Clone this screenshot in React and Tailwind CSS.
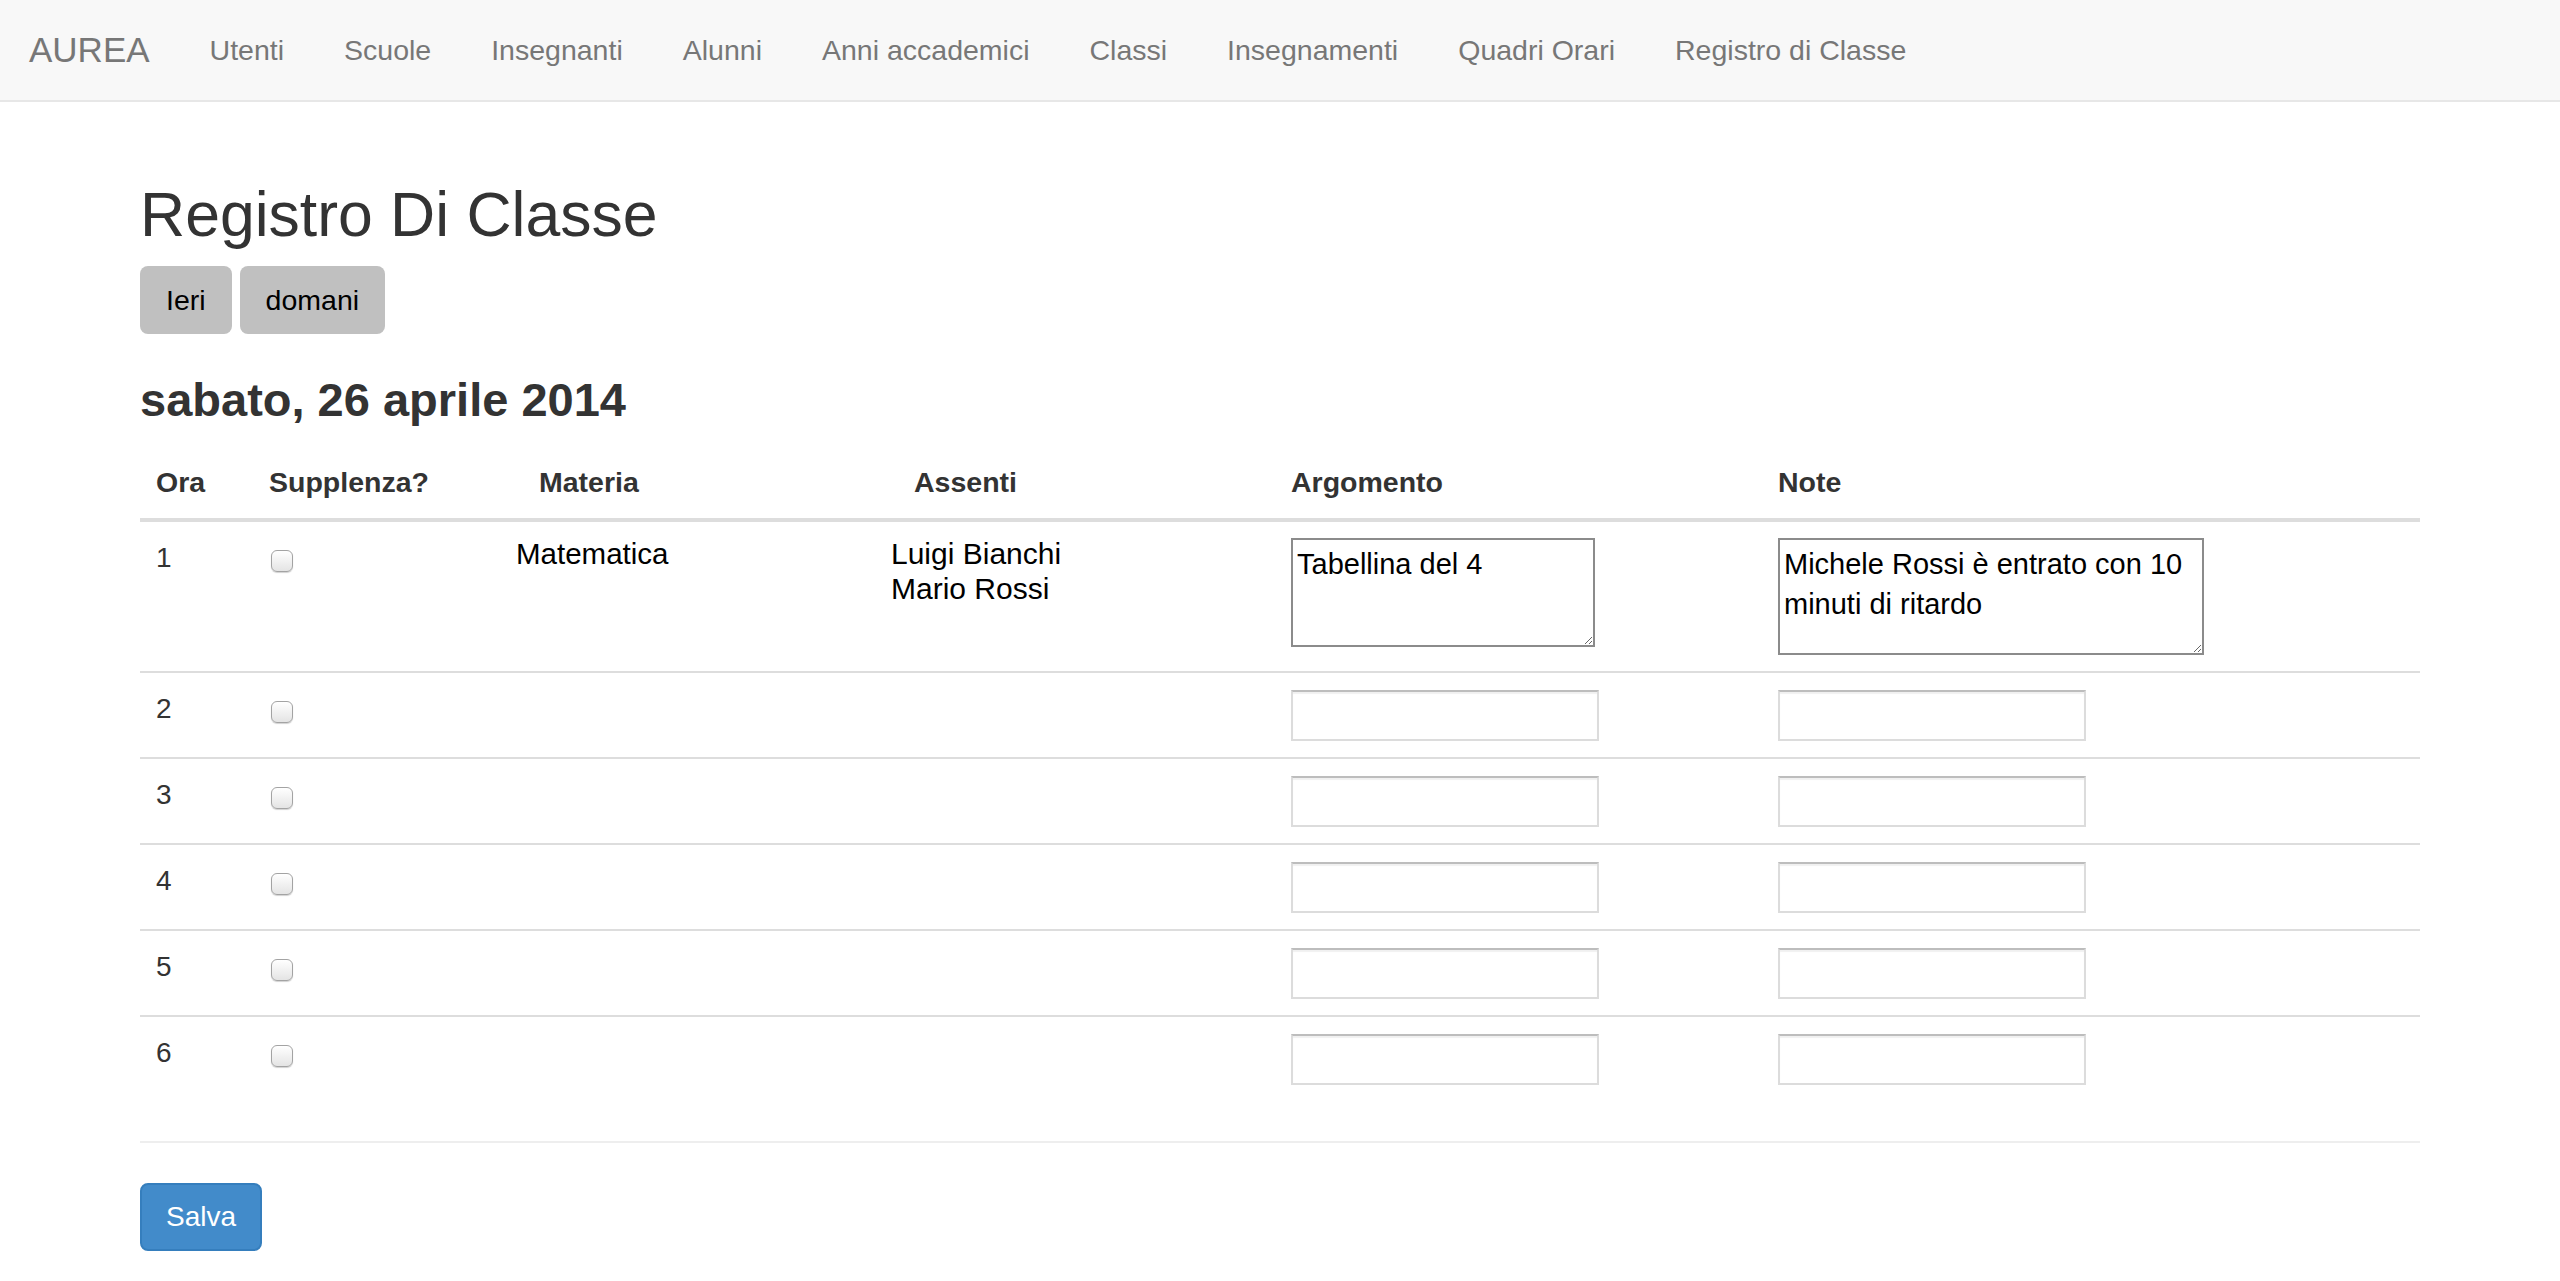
import React from 'react';

const navLinks = ['Utenti', 'Scuole', 'Insegnanti', 'Alunni', 'Anni accademici', 'Classi', 'Insegnamenti', 'Quadri Orari', 'Registro di Classe'];

const rows = [
    { ora: 1, materia: 'Matematica', assenti: ['Luigi Bianchi', 'Mario Rossi'], argomento: 'Tabellina del 4', note: 'Michele Rossi è entrato con 10 minuti di ritardo' },
    { ora: 2 },
    { ora: 3 },
    { ora: 4 },
    { ora: 5 },
    { ora: 6 },
];

function Checkbox() {
    return (
        <input
            type="checkbox"
            className="appearance-none block w-[22px] h-[22px] rounded-[6px] border border-[#a3a3a3] bg-linear-to-b from-white to-[#e4e4e4] shadow-[0_1px_1px_rgba(0,0,0,0.18)]"
        />
    );
}

function TextBox() {
    return (
        <input
            type="text"
            className="block mt-px w-[308px] h-[51px] bg-white border-2 border-[#dcdcdc] border-t-[#bdbdbd] shadow-[inset_0_2px_1px_rgba(0,0,0,0.06)] outline-none"
        />
    );
}

export default function App() {
    return (
        <div className="min-h-screen bg-white font-['Liberation_Sans',Arial,sans-serif]">
            {/* Navbar */}
            <nav className="h-[102px] bg-[#f8f8f8] border-b-2 border-[#e7e7e7] flex items-center">
                <span className="pl-[29px] pr-[30px] text-[35px] leading-[40px] text-[#777]">AUREA</span>
                <ul className="flex">
                    {navLinks.map((l) => (
                        <li key={l} className="px-[30px] text-[28.5px] leading-[40px] text-[#777]">{l}</li>
                    ))}
                </ul>
            </nav>

            <div className="w-[2280px] mx-auto">
                <h2 className="mt-[78px] mb-[18px] text-[62.5px] leading-[68px] font-normal text-[#333]">Registro Di Classe</h2>

                <div className="flex gap-[8px]">
                    <button className="h-[68px] px-[26px] bg-[#c0c0c0] rounded-[8px] text-[28.5px] text-black">Ieri</button>
                    <button className="h-[68px] px-[26px] bg-[#c0c0c0] rounded-[8px] text-[28.5px] text-black">domani</button>
                </div>

                <h3 className="mt-[40px] mb-[20px] text-[47px] leading-[52px] font-bold text-[#333]">sabato, 26 aprile 2014</h3>

                <table className="w-full table-fixed border-separate border-spacing-0 text-[28px] text-[#333]">
                    <colgroup>
                        <col className="w-[113px]" />
                        <col className="w-[247px]" />
                        <col className="w-[375px]" />
                        <col className="w-[400px]" />
                        <col className="w-[487px]" />
                        <col className="w-[658px]" />
                    </colgroup>
                    <thead>
                        <tr className="text-left font-bold leading-[40px] text-[28.5px]">
                            <th className="py-[16px] pl-[16px] border-b-4 border-[#ddd]">Ora</th>
                            <th className="py-[16px] pl-[16px] border-b-4 border-[#ddd]">Supplenza?</th>
                            <th className="py-[16px] pl-[39px] border-b-4 border-[#ddd]">Materia</th>
                            <th className="py-[16px] pl-[39px] border-b-4 border-[#ddd]">Assenti</th>
                            <th className="py-[16px] pl-[16px] border-b-4 border-[#ddd]">Argomento</th>
                            <th className="py-[16px] pl-[16px] border-b-4 border-[#ddd]">Note</th>
                        </tr>
                    </thead>
                    <tbody>
                        {rows.map((r, i) => {
                            const line = i === 0 ? '' : 'border-t-2 border-[#ddd]';
                            return (
                                <tr key={r.ora} className="align-top">
                                    <td className={`${line} py-[16px] pl-[16px] leading-[40px]`}>{r.ora}</td>
                                    <td className={`${line} py-[16px] pl-[18px]`}>
                                        <div className="mt-[12px]"><Checkbox /></div>
                                    </td>
                                    <td className={`${line} pt-[14px] pb-[16px] pl-[16px] leading-[35px] text-[29.5px] text-black`}>{r.materia}</td>
                                    <td className={`${line} pt-[14px] pb-[16px] pl-[16px] leading-[35px] text-[30px] text-black`}>
                                        {r.assenti && r.assenti.map((a) => <div key={a}>{a}</div>)}
                                    </td>
                                    <td className={`${line} py-[16px] pl-[16px]`}>
                                        {r.argomento ? (
                                            <textarea
                                                defaultValue={r.argomento}
                                                className="block w-[304px] h-[109px] border-2 border-[#8b8b8b] pt-[4px] px-[4px] text-[29px] leading-[40px] text-black resize outline-none"
                                            />
                                        ) : <TextBox />}
                                    </td>
                                    <td className={`${line} py-[16px] pl-[16px]`}>
                                        {r.note ? (
                                            <textarea
                                                defaultValue={r.note}
                                                className="block w-[426px] h-[117px] border-2 border-[#8b8b8b] pt-[4px] px-[4px] text-[29px] leading-[40px] text-black resize outline-none"
                                            />
                                        ) : <TextBox />}
                                    </td>
                                </tr>
                            );
                        })}
                    </tbody>
                </table>

                <hr className="mt-[40px] mb-[40px] border-0 border-t-2 border-[#eee]" />

                <button className="h-[68px] px-[24px] bg-[#428bca] border-2 border-[#357ebd] rounded-[8px] text-[28px] text-white">Salva</button>
            </div>
        </div>
    );
}
